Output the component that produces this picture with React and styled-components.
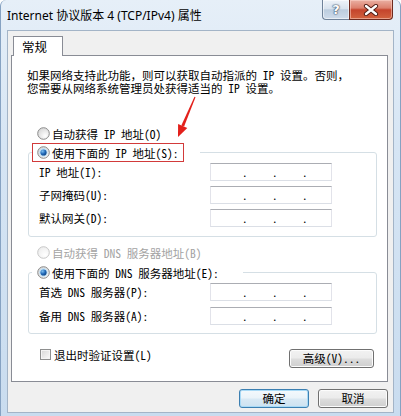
import React, { useId } from "react";
import styled, { createGlobalStyle, css } from "styled-components";

const UI_FONT = `"Noto Sans Mono CJK SC", "Noto Sans CJK SC", sans-serif`;
const CAPTION_FONT = `"Noto Sans", "Noto Sans CJK SC", sans-serif`;

const GlobalStyle = createGlobalStyle`
  html, body { margin: 0; padding: 0; background: #ffffff; }
  body { font-family: ${UI_FONT}; color: #000; }
  *, *::before, *::after { box-sizing: border-box; }
`;

const Window = styled.div`
  width: 401px;
  height: 416px;
  display: flex;
  flex-direction: column;
  padding: 0 6px 3px 6px;
  border-left: 1px solid #86a2c2;
  border-right: 1px solid #86a2c2;
  border-radius: 6px 6px 0 0;
  background: linear-gradient(180deg, #e6eff8 0%, #d6e5f4 35%, #c9dcef 100%);
`;

const TitleBar = styled.div`
  height: 30px;
  flex: none;
  display: flex;
  align-items: flex-start;
`;

const Title = styled.div`
  font-family: ${CAPTION_FONT};
  font-size: 12px;
  line-height: 16px;
  padding-top: 8px;
  color: #000;
  white-space: nowrap;
`;

const CaptionButtons = styled.div`
  margin-left: auto;
  margin-right: 1px;
  display: flex;
`;

const captionBase = css`
  height: 20px;
  display: flex;
  align-items: center;
  justify-content: center;
  border-style: solid;
  border-width: 0 1px 1px 1px;
`;

const HelpButton = styled.div`
  ${captionBase};
  width: 27px;
  border-color: #6f8299;
  border-right-width: 0;
  border-radius: 0 0 0 4px;
  background: linear-gradient(180deg, #eef3f9 0%, #d9e3ee 45%, #bccddf 52%, #cfdceb 100%);
  box-shadow: inset 0 0 0 1px rgba(255, 255, 255, 0.55);
  font-family: "DejaVu Sans", sans-serif;
  font-weight: bold;
  font-size: 13px;
  color: #ffffff;
  text-shadow: 0 0 1px #3b4d66, 0 0 1px #3b4d66, 0 0 2px #3b4d66;
`;

const CloseButton = styled.div`
  ${captionBase};
  width: 44px;
  border-color: #6e2a1f;
  border-radius: 0 0 4px 0;
  background: linear-gradient(180deg, #eab0a3 0%, #dc806d 42%, #c5442c 52%, #d2633f 100%);
  box-shadow: inset 0 0 0 1px rgba(255, 220, 210, 0.5);
`;

const Client = styled.div`
  flex: 1;
  display: flex;
  flex-direction: column;
  background: #f0f0f0;
  border: 1px solid #a3b4c7;
  padding: 5px 5px 0 3px;
`;

const TabStrip = styled.div`
  display: flex;
  padding-left: 2px;
  margin-bottom: -1px;
  position: relative;
  z-index: 1;
`;

const Tab = styled.div`
  width: 50px;
  height: 20px;
  border: 1px solid #898c95;
  border-bottom: none;
  background: #ffffff;
  font-family: "Noto Sans CJK SC", sans-serif;
  font-size: 12.5px;
  line-height: 20px;
  padding-left: 8px;
`;

const Panel = styled.div`
  position: relative;
  height: 327px;
  flex: none;
  border: 1px solid #898c95;
  background: #ffffff;
  display: flex;
  flex-direction: column;
  font-size: 11.5px;
`;

const Intro = styled.p`
  margin: 13px 0 0 15px;
  line-height: 13px;
  white-space: nowrap;
`;

const OptionRow = styled.label`
  display: flex;
  align-items: center;
  height: 19px;
  padding-left: ${(p) => p.$indent ?? 25}px;
  margin-top: ${(p) => p.$gap ?? 0}px;
  color: ${(p) => (p.$disabled ? "#a3a3a3" : "#000")};
  white-space: nowrap;
`;

const RadioSvg = styled.svg`
  flex: none;
  margin-right: 2px;
`;

const Group = styled.fieldset`
  margin: ${(p) => p.$gap ?? 0}px 10px 0 16px;
  padding: 0;
  border: 1px solid #d5dfe5;
  border-radius: 3px;
  min-width: 0;
`;

const GroupLegend = styled.legend`
  width: ${(p) => p.$width}px;
  margin-left: 3px;
  padding: 0;
  height: 19px;
`;

const LegendMark = styled.span`
  display: inline-flex;
  align-items: center;
  height: 19px;
  padding: 0 4px;
  border: 1px solid ${(p) => (p.$marked ? "#d23a3a" : "transparent")};
  white-space: nowrap;
`;

const GroupBody = styled.div`
  display: flex;
  flex-direction: column;
  gap: ${(p) => p.$rowGap}px;
  padding: ${(p) => p.$top}px 0 ${(p) => p.$bottom}px 10px;
`;

const FieldRow = styled.div`
  display: flex;
  align-items: center;
  height: 18px;
`;

const FieldLabel = styled.span`
  width: 171px;
  white-space: nowrap;
`;

const IpBox = styled.div`
  width: 122px;
  height: 18px;
  display: flex;
  padding-left: 4px;
  background: #ffffff;
  border: 1px solid #dbdfe6;
  border-top-color: #abadb3;
  border-left-color: #e2e3ea;
  border-right-color: #e2e3ea;
`;

const IpSegment = styled.span`
  width: 27px;
`;

const IpDot = styled.span`
  width: 3px;
  line-height: 17px;
  font-size: 11px;
  text-align: center;
`;

const Footer = styled.div`
  display: flex;
  align-items: flex-start;
  margin-top: 11px;
  padding: 0 13px 0 28px;
`;

const CheckRow = styled.label`
  display: flex;
  align-items: center;
  height: 19px;
  white-space: nowrap;
`;

const CheckBox = styled.span`
  width: 11px;
  height: 11px;
  margin-right: 3px;
  border: 1px solid #8e8f8f;
  background: linear-gradient(135deg, #d6d6d6 0%, #ececec 60%, #fbfbfb 100%);
  box-shadow: inset 0 0 0 1px #f4f4f4;
`;

const PushButton = styled.button`
  width: ${(p) => p.$width}px;
  height: 19px;
  margin-top: ${(p) => p.$top ?? 0}px;
  margin-left: ${(p) => (p.$push ? "auto" : "0")};
  padding: 0;
  border: 1px solid ${(p) => (p.$default ? "#3c7fb1" : "#707070")};
  border-radius: 3px;
  background: ${(p) =>
    p.$default
      ? "linear-gradient(180deg, #f4f9fc 0%, #eaf3f9 48%, #d9e9f4 52%, #cde2f1 100%)"
      : "linear-gradient(180deg, #f2f2f2 0%, #ebebeb 48%, #dddddd 52%, #cfcfcf 100%)"};
  box-shadow: inset 0 0 0 1px ${(p) => (p.$default ? "#a9daf6" : "#fcfcfc")};
  font-family: ${UI_FONT};
  font-size: 11.5px;
  color: #000;
  line-height: 17px;
`;

const DialogButtons = styled.div`
  display: flex;
  justify-content: flex-end;
  gap: 9px;
  margin-top: 7px;
`;

const AnnotationArrow = styled.svg`
  position: absolute;
  left: 158px;
  top: 36px;
  pointer-events: none;
`;

function Radio({ checked = false, disabled = false }) {
  const id = useId().replace(/:/g, "");
  return (
    <RadioSvg width="13" height="13" viewBox="0 0 13 13">
      <defs>
        <radialGradient id={`face${id}`} cx="0.65" cy="0.7" r="0.7">
          <stop offset="0" stopColor="#ffffff" />
          <stop offset="1" stopColor={disabled ? "#eeeeee" : "#d9d9d9"} />
        </radialGradient>
        <radialGradient id={`dot${id}`} cx="0.35" cy="0.3" r="0.8">
          <stop offset="0" stopColor="#7fc0f0" />
          <stop offset="0.55" stopColor="#2068b8" />
          <stop offset="1" stopColor="#0b3c78" />
        </radialGradient>
      </defs>
      <circle
        cx="6.5"
        cy="6.5"
        r="5.8"
        fill={`url(#face${id})`}
        stroke={disabled ? "#c7c7c7" : "#8a8a8a"}
        strokeWidth="1"
      />
      {checked && (
        <>
          <circle cx="6.5" cy="6.5" r="4.2" fill="#bfe0f6" />
          <circle cx="6.5" cy="6.5" r="3.1" fill={`url(#dot${id})`} />
        </>
      )}
    </RadioSvg>
  );
}

function IpField() {
  return (
    <IpBox>
      <IpSegment />
      <IpDot>.</IpDot>
      <IpSegment />
      <IpDot>.</IpDot>
      <IpSegment />
      <IpDot>.</IpDot>
    </IpBox>
  );
}

export default function App() {
  return (
    <>
      <GlobalStyle />
      <Window>
        <TitleBar>
          <Title>Internet 协议版本 4 (TCP/IPv4) 属性</Title>
          <CaptionButtons>
            <HelpButton>?</HelpButton>
            <CloseButton>
              <svg width="16" height="12" viewBox="0 0 16 12">
                <path d="M3 2 L13 10 M13 2 L3 10" stroke="#4d1a12" strokeWidth="4.2" strokeLinecap="round" />
                <path d="M3 2 L13 10 M13 2 L3 10" stroke="#ffffff" strokeWidth="2.4" strokeLinecap="round" />
              </svg>
            </CloseButton>
          </CaptionButtons>
        </TitleBar>

        <Client>
          <TabStrip>
            <Tab>常规</Tab>
          </TabStrip>

          <Panel>
            <Intro>
              如果网络支持此功能，则可以获取自动指派的 IP 设置。否则，
              <br />
              您需要从网络系统管理员处获得适当的 IP 设置。
            </Intro>

            <OptionRow $gap={29}>
              <Radio />
              自动获得 IP 地址(O)
            </OptionRow>

            <Group>
              <GroupLegend $width={168}>
                <LegendMark $marked>
                  <Radio checked />
                  使用下面的 IP 地址(S):
                </LegendMark>
              </GroupLegend>
              <GroupBody $top={1} $bottom={9} $rowGap={5}>
                <FieldRow>
                  <FieldLabel>IP 地址(I):</FieldLabel>
                  <IpField />
                </FieldRow>
                <FieldRow>
                  <FieldLabel>子网掩码(U):</FieldLabel>
                  <IpField />
                </FieldRow>
                <FieldRow>
                  <FieldLabel>默认网关(D):</FieldLabel>
                  <IpField />
                </FieldRow>
              </GroupBody>
            </Group>

            <OptionRow $gap={6} $disabled>
              <Radio disabled />
              自动获得 DNS 服务器地址(B)
            </OptionRow>

            <Group $gap={1}>
              <GroupLegend $width={211}>
                <LegendMark>
                  <Radio checked />
                  使用下面的 DNS 服务器地址(E):
                </LegendMark>
              </GroupLegend>
              <GroupBody $top={1} $bottom={8} $rowGap={6}>
                <FieldRow>
                  <FieldLabel>首选 DNS 服务器(P):</FieldLabel>
                  <IpField />
                </FieldRow>
                <FieldRow>
                  <FieldLabel>备用 DNS 服务器(A):</FieldLabel>
                  <IpField />
                </FieldRow>
              </GroupBody>
            </Group>

            <Footer>
              <CheckRow>
                <CheckBox />
                退出时验证设置(L)
              </CheckRow>
              <PushButton $width={85} $top={4} $push>
                高级(V)...
              </PushButton>
            </Footer>

            <AnnotationArrow width="32" height="50" viewBox="0 0 32 50">
              <polygon points="25.5,5.2 24.5,4.8 11.3,33.4 14.1,34.6" fill="#e3201b" />
              <polygon points="8,45 17.3,36 8.1,32" fill="#e3201b" />
            </AnnotationArrow>
          </Panel>

          <DialogButtons>
            <PushButton $width={70} $default>
              确定
            </PushButton>
            <PushButton $width={70}>取消</PushButton>
          </DialogButtons>
        </Client>
      </Window>
    </>
  );
}
